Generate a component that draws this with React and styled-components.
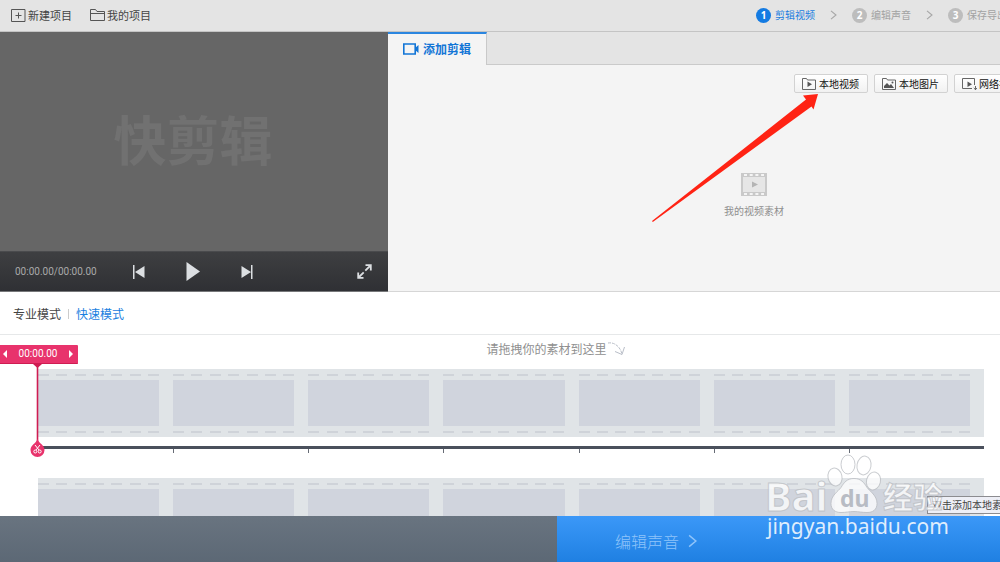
import React, { Fragment } from 'react'
import styled, { createGlobalStyle } from 'styled-components'

const steps = ['剪辑视频', '编辑声音', '保存导出']

const sources = [
  { label: '本地视频', icon: 'video' },
  { label: '本地图片', icon: 'image' },
  { label: '网络视频', icon: 'web' },
]

const cells = [1, 2, 3, 4, 5, 6, 7]

const GlobalStyle = createGlobalStyle`
  * {
    box-sizing: border-box;
  }

  body {
    margin: 0;
    background: #fff;
    font-family: 'Noto Sans CJK SC', sans-serif;
    font-size: 10px;
    line-height: 16px;
  }

  button {
    display: inline-flex;
    align-items: center;
    margin: 0;
    padding: 0;
    border: 0;
    background: none;
    color: inherit;
    font: inherit;
    white-space: nowrap;
    cursor: pointer;
  }

  svg {
    display: block;
    flex: none;
  }
`

const Page = styled.div`
  position: relative;
  display: flex;
  flex-direction: column;
  height: 100vh;
  overflow: hidden;
`

const Header = styled.header`
  display: grid;
  grid-template-columns: 1fr 244px;
  align-items: center;
  flex: none;
  height: 32px;
  padding-bottom: 1px;
  background: #e4e4e4;
  border-bottom: 1px solid #c4c4c4;
`

const ProjectMenu = styled.nav`
  display: flex;
  gap: 18px;
  padding-left: 11px;
`

const ProjectButton = styled.button`
  && {
    gap: 2px;
    color: #444;
    font-size: 11px;
  }
`

const Steps = styled.ol`
  display: flex;
  align-items: center;
  margin: 0;
  padding: 0;
  list-style: none;
  white-space: nowrap;
  overflow: hidden;
`

const Step = styled.li`
  display: flex;
  align-items: center;
  flex: none;
  gap: 4px;
  color: ${({ $active }) => ($active ? '#1a7de0' : '#a2a2a2')};

  & > svg {
    margin: 0 15px 0 11px;
  }
`

const StepNumber = styled.span`
  width: 15px;
  height: 15px;
  border-radius: 50%;
  background: ${({ $active }) => ($active ? '#147be2' : '#bdbdbd')};
  color: #fff;
  font-family: 'Open Sans', sans-serif;
  font-weight: 700;
  line-height: 15px;
  text-align: center;
`

const Workspace = styled.div`
  display: grid;
  grid-template-columns: 388fr 612fr;
  flex: none;
  height: 260px;
`

const Preview = styled.section`
  display: flex;
  flex-direction: column;
  min-width: 0;
  background: #666;
`

const Screen = styled.div`
  display: flex;
  align-items: center;
  justify-content: center;
  flex: 1;
  padding: 0 2px 8px 0;
  color: #717171;
  font-size: 53px;
  font-weight: 700;
  line-height: 64px;
`

const Controls = styled.div`
  display: flex;
  align-items: center;
  gap: 38px;
  height: 41px;
  padding: 0 16px 0 15px;
  border-top: 1px solid #4a4b4d;
  border-bottom: 1px solid #77787a;
  background: linear-gradient(#3e3f41, #2f3034);
`

const Timecode = styled.span`
  width: 78px;
  color: #a9a9a9;
  font-family: Roboto, sans-serif;
  white-space: nowrap;
`

const ControlButton = styled.button`
  && {
    justify-content: center;
    width: 16px;
    height: 20px;
    margin-left: ${({ $end }) => ($end ? 'auto' : '0')};
  }
`

const Library = styled.section`
  display: flex;
  flex-direction: column;
  min-width: 0;
  background: #f4f4f4;
  border-bottom: 1px solid #d6d6d6;
`

const Tabs = styled.div`
  display: flex;
  height: 33px;
  background: linear-gradient(to right, #f4f4f4 98px, #e4e4e4 98px);
`

const Tab = styled.button`
  && {
    justify-content: center;
    gap: 4px;
    width: 99px;
    padding-bottom: 1px;
    border-top: 2px solid #2b86e0;
    border-right: 1px solid #c9c9c9;
    color: #1275d6;
    font-size: 12px;
    font-weight: 700;
  }
`

const TabsRest = styled.div`
  flex: 1;
  border-bottom: 1px solid #cacaca;
`

const Toolbar = styled.div`
  display: flex;
  gap: 6px;
  width: 206px;
  margin: 9px 0 0 auto;
  overflow: hidden;
`

const SourceButton = styled.button`
  && {
    flex: none;
    gap: 2px;
    width: 74px;
    height: 19px;
    padding-left: 7px;
    border: 1px solid #d2d2d2;
    border-radius: 2px;
    background: linear-gradient(#fff, #f1f1f1);
    color: #111;
  }
`

const EmptyState = styled.div`
  display: flex;
  flex-direction: column;
  align-items: center;
  justify-content: center;
  flex: 1;
  gap: 7px;
  padding: 8px 0 0 120px;
  color: #8f8f8f;
`

const ModeBar = styled.div`
  display: flex;
  align-items: center;
  flex: none;
  gap: 7px;
  height: 43px;
  padding: 2px 0 0 13px;
  border-bottom: 1px solid #e6e8e9;
`

const ModeButton = styled.button`
  && {
    color: ${({ $active }) => ($active ? '#1a80e0' : '#444')};
    font-size: 12px;
  }
`

const ModeDivider = styled.span`
  width: 1px;
  height: 10px;
  background: #ccc;
`

const Timeline = styled.section`
  position: relative;
  flex: 1;
  min-height: 0;
  padding: 6px 16px 0 38px;
  overflow: hidden;
`

const DropHint = styled.p`
  display: flex;
  justify-content: center;
  height: 28px;
  margin: 0;
  padding-left: 90px;
  color: #8f8f8f;
  font-size: 12px;
`

const Film = styled.div`
  display: grid;
  grid-template-columns: repeat(7, 1fr);
  height: 68px;
  padding-top: 5px;
  background: #e0e4e7;
`

const Cell = styled.div`
  padding-right: 14px;
`

const Perforation = styled.div`
  display: flex;
  justify-content: space-between;

  i {
    width: 11px;
    height: 2px;
    background: #cfd3d9;
  }
`

const Frame = styled.div`
  height: 46px;
  margin: 4px 0 5px;
  background: #d0d4dd;
`

const Ruler = styled.div`
  display: grid;
  grid-template-columns: repeat(7, 1fr);
  height: 32px;
  margin-top: 9px;
  border-top: 3px solid #4a505c;

  span {
    height: 4px;
    border-left: 1px solid #666b75;
  }

  span:first-child {
    border-color: transparent;
  }
`

const Playhead = styled.div`
  position: absolute;
  top: 10px;
  left: 0;
  width: 78px;
`

const PlayheadLabel = styled.div`
  display: flex;
  align-items: center;
  justify-content: space-between;
  height: 19px;
  padding: 0 3px 0 1px;
  border-bottom: 1px solid #cf1c52;
  border-radius: 0 1px 1px 0;
  background: #e8336c;
  color: #fff;
  font-family: Roboto, sans-serif;
`

const PlayheadPin = styled.svg`
  margin-left: 30px;
`

const Notch = styled.button`
  && {
    justify-content: center;
    width: 8px;
    height: 14px;
  }
`

const Footer = styled.footer`
  display: grid;
  grid-template-columns: 557fr 443fr;
  flex: none;
  height: 46px;
  background: linear-gradient(#697480, #5c6875);
`

const NextButton = styled.button`
  && {
    gap: 9px;
    padding: 4px 0 0 58px;
    background: linear-gradient(#3b98f8, #1f80e2);
    color: #8fc4fa;
    font-size: 16px;
    font-weight: 300;
    line-height: 24px;
  }
`

const Tooltip = styled.div`
  position: absolute;
  top: 496px;
  left: 927px;
  height: 18px;
  padding: 0 4px;
  border: 1px solid #8c8c90;
  background: #eeeff6;
  color: #444;
  white-space: nowrap;
`

const Arrow = styled.svg`
  position: absolute;
  top: 92px;
  left: 650px;
  pointer-events: none;
`

const Watermark = styled.svg`
  position: absolute;
  top: 450px;
  left: 760px;
  pointer-events: none;
`

function Chevron({ width, height, color }) {
  return (
    <svg width={width} height={height} viewBox="0 0 8 12" fill="none" stroke={color} strokeWidth="1.3">
      <path d="M1 1l6 5-6 5" />
    </svg>
  )
}

function SourceIcon({ type }) {
  return (
    <svg width="15" height="12" viewBox="0 0 15 12" fill="none" stroke="#666">
      {type === 'web'
        ? <path d="M12.5 7V.5H.5v10H10M13.5 8v4M11.8 10l1.7 1.7L15 10" />
        : <path d="M.5 11.500V.5h4l1 1.500h8v9.500z" />}
      {type === 'image'
        ? <path d="M2 10V8l3-3 2.500 2.500L9 6l3 4z" fill="#555" stroke="none" />
        : <path d="M5.500 3.500v5.500l4.500-2.700z" fill="#555" stroke="none" />}
      {type === 'image' && <circle cx="10.500" cy="4.500" r="1" fill="#555" stroke="none" />}
    </svg>
  )
}

function FilmStrip() {
  return (
    <Film>
      {cells.map(cell => (
        <Cell key={cell}>
          <Perforation>{cells.map(hole => <i key={hole} />)}</Perforation>
          <Frame />
          <Perforation>{cells.map(hole => <i key={hole} />)}</Perforation>
        </Cell>
      ))}
    </Film>
  )
}

function Player() {
  return (
    <Preview>
      <Screen>快剪辑</Screen>
      <Controls>
        <Timecode>00:00.00/00:00.00</Timecode>
        <ControlButton aria-label="上一帧">
          <svg width="12" height="14" viewBox="0 0 12 14" fill="#dcdfe2">
            <path d="M0 0h1.500v14H0zM11.500 1v12L2 7z" />
          </svg>
        </ControlButton>
        <ControlButton aria-label="播放">
          <svg width="14" height="19" viewBox="0 0 14 19" fill="#dcdfe2">
            <path d="M.5 0L14 9.500.5 19z" />
          </svg>
        </ControlButton>
        <ControlButton aria-label="下一帧">
          <svg width="12" height="14" viewBox="0 0 12 14" fill="#dcdfe2">
            <path d="M10 0h1.500v14H10zM.5 1v12L10 7z" />
          </svg>
        </ControlButton>
        <ControlButton $end aria-label="全屏">
          <svg width="15" height="15" viewBox="0 0 15 15" fill="none" stroke="#dcdfe2" strokeWidth="1.800">
            <path d="M8.500 1.200h5.300v5.300M13.500 1.500L8.300 6.700M6.500 13.800H1.200V8.500M1.500 13.500l5.200-5.200" />
          </svg>
        </ControlButton>
      </Controls>
    </Preview>
  )
}

function MediaLibrary() {
  return (
    <Library>
      <Tabs>
        <Tab>
          <svg width="16" height="12" viewBox="0 0 16 12" fill="none" stroke="#1275d6" strokeWidth="1.600">
            <path d="M.8 1h11.400v10H.8z" />
            <path d="M12 5l3.500-3v8L12 7z" fill="#1275d6" stroke="none" />
          </svg>
          添加剪辑
        </Tab>
        <TabsRest />
      </Tabs>
      <Toolbar>
        {sources.map(source => (
          <SourceButton key={source.label}>
            <SourceIcon type={source.icon} />
            {source.label}
          </SourceButton>
        ))}
      </Toolbar>
      <EmptyState>
        <svg width="26" height="23" viewBox="0 0 26 23">
          <path d="M0 0h26v23H0z" fill="#c9c9c9" />
          <path d="M2 4h22v15H2z" fill="#e6e6e6" />
          <path d="M3 2h20M3 21h20" stroke="#f4f4f4" strokeWidth="2" strokeDasharray="3 2.700" />
          <path d="M11 8.500v6l6-3z" fill="#b4b4b4" />
        </svg>
        我的视频素材
      </EmptyState>
    </Library>
  )
}

function TimelinePlayhead() {
  return (
    <Playhead>
      <PlayheadLabel>
        <Notch aria-label="后退">
          <svg width="4" height="8" viewBox="0 0 4 8" fill="#fff"><path d="M4 0v8L0 4z" /></svg>
        </Notch>
        00:00.00
        <Notch aria-label="前进">
          <svg width="4" height="8" viewBox="0 0 4 8" fill="#fff"><path d="M0 0v8l4-4z" /></svg>
        </Notch>
      </PlayheadLabel>
      <PlayheadPin width="16" height="94" viewBox="0 0 16 94">
        <path d="M3 0h9L7.500 4z" fill="#cf1c52" />
        <path d="M6.700 0h1.600v78H6.700z" fill="#cf1c52" />
        <path d="M7.500 75C9 79.500 14.500 81 14.500 86a7 7 0 0 1-14 0C.5 81 6 79.500 7.500 75z" fill="#e8336c" />
        <g fill="none" stroke="#fff">
          <path d="M5 81l4 5M10 81l-4 5" />
          <circle cx="5.300" cy="87.500" r="1.500" />
          <circle cx="9.700" cy="87.500" r="1.500" />
        </g>
      </PlayheadPin>
    </Playhead>
  )
}

function BaiduMark() {
  return (
    <Watermark width="200" height="96" viewBox="0 0 200 96" fontFamily="'Noto Sans', 'Noto Sans CJK SC', sans-serif">
      <g fill="#fff" fillOpacity=".75" stroke="#b4b7bc" strokeOpacity=".7">
        <text x="5" y="61" fontSize="40" fontWeight="700">Bai</text>
        <ellipse cx="75" cy="27" rx="7" ry="9" transform="rotate(-12 75 27)" />
        <ellipse cx="88" cy="14.500" rx="7" ry="9.500" />
        <ellipse cx="104" cy="15.500" rx="7" ry="9.500" transform="rotate(10 104 15.500)" />
        <ellipse cx="113.500" cy="31" rx="7" ry="9" transform="rotate(14 113.500 31)" />
        <path d="M94 28.500c7 0 10 4 13 9 3 4 10 8 10 16 0 6-4 9-10 9-5 0-8-1-13-1s-8 1-13 1c-6 0-10-3-10-9 0-8 7-12 10-16 3-5 6-9 13-9z" />
        <text x="123" y="58" fontSize="30" fontWeight="700">经验</text>
      </g>
      <text x="80" y="57" fontSize="23" fontWeight="700" fill="#b8bcc4">du</text>
      <text x="7" y="84" fontSize="21" fill="#fff" fillOpacity=".85">jingyan.baidu.com</text>
    </Watermark>
  )
}

export default function App() {
  return (
    <Fragment>
      <GlobalStyle />
      <Page>
        <Header>
          <ProjectMenu>
            <ProjectButton>
              <svg width="15" height="13" viewBox="0 0 15 13" fill="none" stroke="#555">
                <path d="M.5.5h13.500v12H.5zM4.500 6.500h6M7.500 3.500v6" />
              </svg>
              新建项目
            </ProjectButton>
            <ProjectButton>
              <svg width="15" height="12" viewBox="0 0 15 12" fill="none" stroke="#555">
                <path d="M.5 11.500V.5h5l1.500 2h7.500v9zM.5 4.500h14" />
              </svg>
              我的项目
            </ProjectButton>
          </ProjectMenu>
          <Steps>
            {steps.map((step, index) => (
              <Step key={step} $active={index === 0}>
                <StepNumber $active={index === 0}>{index + 1}</StepNumber>
                {step}
                {index < steps.length - 1 && <Chevron width={7} height={10} color="#a6a6a6" />}
              </Step>
            ))}
          </Steps>
        </Header>
        <Workspace>
          <Player />
          <MediaLibrary />
        </Workspace>
        <ModeBar>
          <ModeButton>专业模式</ModeButton>
          <ModeDivider />
          <ModeButton $active>快速模式</ModeButton>
        </ModeBar>
        <Timeline>
          <DropHint>
            请拖拽你的素材到这里
            <svg width="19" height="16" viewBox="0 0 19 16" fill="none" stroke="#b9bec8">
              <path d="M1 2c6-1 12 3 14 11" strokeDasharray="3 1" />
              <path d="M8 10.500l7 3 2.500-7.500" />
            </svg>
          </DropHint>
          <FilmStrip />
          <Ruler>{cells.map(cell => <span key={cell} />)}</Ruler>
          <FilmStrip />
          <TimelinePlayhead />
        </Timeline>
        <Footer>
          <span />
          <NextButton>
            编辑声音
            <Chevron width={9} height={14} color="#8fc4fa" />
          </NextButton>
        </Footer>
        <Tooltip role="tooltip">双击添加本地素材</Tooltip>
        <BaiduMark />
        <Arrow width="170" height="132" viewBox="0 0 170 132" fill="#ff2314">
          <path d="M168 2l-15 1.500 3 4L2 129l.8 1L161.500 14.500l2 3z" />
        </Arrow>
      </Page>
    </Fragment>
  )
}
